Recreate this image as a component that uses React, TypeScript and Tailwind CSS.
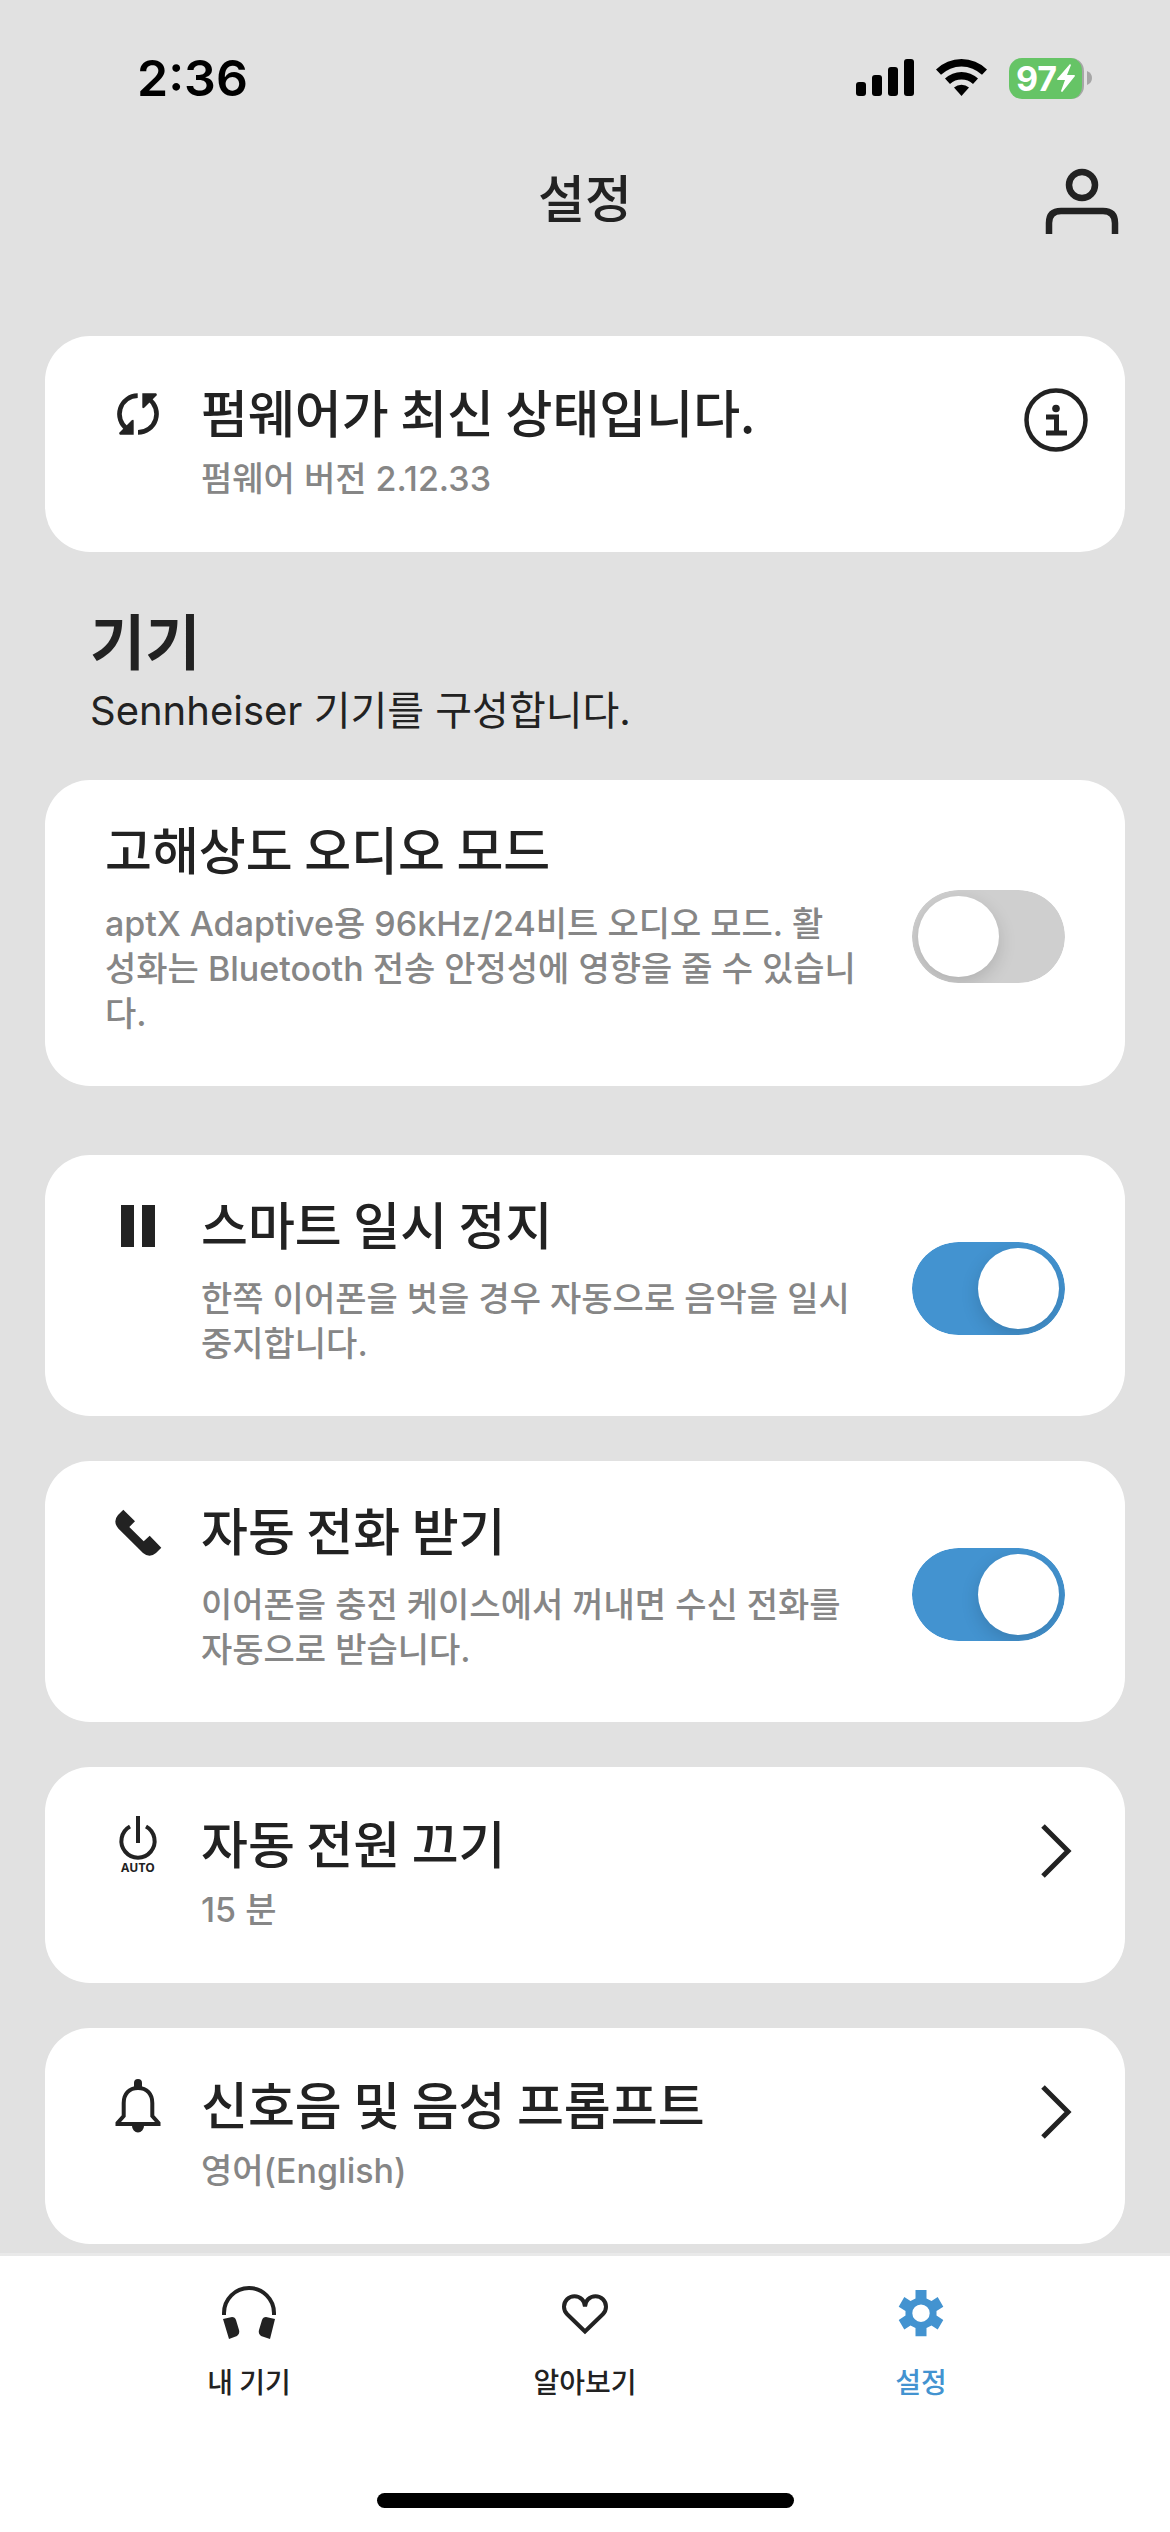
import { useState } from "react";
import type { ReactNode } from "react";
import clsx from "clsx";

/* Icons */

function SyncIcon() {
  return (
    <svg width="48" height="48" viewBox="0 0 48 48" fill="none" aria-hidden="true">
      <path d="M23.700 5.600A18.500 18.500 0 0 0 13 39" stroke="currentColor" strokeWidth="4.600" />
      <path d="M24 42.400A18.500 18.500 0 0 0 35 9" stroke="currentColor" strokeWidth="4.600" />
      <path d="M19.700 31V44.700H6Q4.500 44 5.500 42.500L17.500 30.500Q19.700 29 19.700 31Z" fill="currentColor" />
      <path d="M28.300 17V3.300H42Q43.500 4 42.500 5.500L30.500 17.500Q28.300 19 28.300 17Z" fill="currentColor" />
    </svg>
  );
}

function PauseIcon() {
  return (
    <svg width="48" height="48" viewBox="0 0 48 48" fill="currentColor" aria-hidden="true">
      <path d="M7 3h13v42H7zM28 3h13v42H28z" />
    </svg>
  );
}

function PhoneIcon() {
  return (
    <svg width="48" height="48" viewBox="0 0 48 48" fill="currentColor" aria-hidden="true">
      <path d="M9.300 1.700L21 13.300L15.300 19L29.700 33.300L35.700 27.700L47.300 39.700L42 45Q35.500 50.500 29 45L4.300 20.500Q-1.500 13.500 4 7Z" />
    </svg>
  );
}

function PowerAutoIcon() {
  return (
    <svg width="48" height="66" viewBox="0 0 48 66" aria-hidden="true">
      <path
        d="M16 14.500A16.600 16.600 0 1 0 32 14.500M24 4V31"
        fill="none"
        stroke="currentColor"
        strokeWidth="4"
      />
      <text
        x="24"
        y="60"
        textAnchor="middle"
        fill="currentColor"
        className="font-['Open_Sans',sans-serif] text-[12px] font-bold"
      >
        AUTO
      </text>
    </svg>
  );
}

function BellIcon() {
  return (
    <svg width="48" height="56" viewBox="0 0 48 56" aria-hidden="true">
      <path
        d="M24 10C15 10 9.700 16 9.700 25V38L3.500 45V46H44.500V45L38.300 38V25C38.300 16 33 10 24 10Z"
        fill="none"
        stroke="currentColor"
        strokeWidth="4"
      />
      <path d="M20 9V5a4 4 0 0 1 8 0v4zM18 48h12a6 6.500 0 0 1-12 0z" fill="currentColor" />
    </svg>
  );
}

function InfoIcon() {
  return (
    <svg width="64" height="64" viewBox="0 0 64 64" fill="none" aria-hidden="true">
      <circle cx="32" cy="32" r="29.500" stroke="currentColor" strokeWidth="4.500" />
      <circle cx="32" cy="20.500" r="3.800" fill="currentColor" />
      <path d="M22 29H32.500V45M22 45H43" stroke="currentColor" strokeWidth="5" />
    </svg>
  );
}

function ChevronIcon() {
  return (
    <svg width="32" height="54" viewBox="0 0 32 54" fill="none" aria-hidden="true">
      <path d="M3 2L28 27L3 52" stroke="currentColor" strokeWidth="5" />
    </svg>
  );
}

function PersonIcon() {
  return (
    <svg width="74" height="68" viewBox="0 0 74 68" fill="none" aria-hidden="true">
      <circle cx="37" cy="17" r="13" stroke="currentColor" strokeWidth="6.500" />
      <path d="M4 66V55Q4 43 16 43H58Q70 43 70 55V66" stroke="currentColor" strokeWidth="6.500" />
    </svg>
  );
}

function HeadphonesIcon() {
  return (
    <svg width="54" height="54" viewBox="0 0 54 54" aria-hidden="true">
      <path d="M2 29V27A25 25 0 0 1 52 27V29" fill="none" stroke="currentColor" strokeWidth="4" />
      <path
        d="M1 33L10 31Q13 31 14 34L17 44Q18 48 15 50L7 53ZM53 33L44 31Q41 31 40 34L37 44Q36 48 39 50L48 53Z"
        fill="currentColor"
      />
    </svg>
  );
}

function HeartIcon() {
  return (
    <svg width="54" height="54" viewBox="0 0 54 54" fill="none" aria-hidden="true">
      <path
        d="M27 45.500L9.200 28.200A10.500 10.500 0 0 1 6 20.700A10.500 10.500 0 0 1 27 20.700A10.500 10.500 0 0 1 48 20.700A10.500 10.500 0 0 1 44.800 28.200Z"
        stroke="currentColor"
        strokeWidth="4"
      />
    </svg>
  );
}

function GearIcon() {
  return (
    <svg width="54" height="54" viewBox="0 0 54 54" fill="currentColor" aria-hidden="true">
      <path
        fillRule="evenodd"
        d="M21.500 4H32.500V12.500L37.500 15L43.700 11L49.300 20.700L42.500 25V29.500L49.300 34L43.700 43.500L37.500 39.500L32.500 42V50.300H21.500V42L16.500 39.500L10.300 43.500L4.700 34L11.500 29.500V25L4.700 20.700L10.300 11L16.500 15L21.500 12.500ZM27 18.500A8.700 8.700 0 1 0 27 35.900A8.700 8.700 0 1 0 27 18.500Z"
      />
    </svg>
  );
}

/* Status bar */

function StatusBar() {
  return (
    <div className="flex items-center justify-between pt-12 pr-[78px] pl-[137px]">
      <span className="font-[Inter,sans-serif] text-[50px] leading-[60px] font-semibold text-black">
        2:36
      </span>
      <div className="flex items-center">
        <svg width="58" height="38" viewBox="0 0 58 38" aria-hidden="true">
          <rect x="0" y="23" width="10" height="14" rx="3" />
          <rect x="16" y="16" width="10" height="21" rx="3" />
          <rect x="32" y="8" width="10" height="29" rx="3" />
          <rect x="48" y="0" width="10" height="37" rx="3" />
        </svg>
        <svg className="ml-[22px]" width="51" height="38" viewBox="0 0 51 38" aria-hidden="true">
          <path d="M0 10.500A36.500 36.500 0 0 1 51 10.500L46 15.800A29.500 29.500 0 0 0 5 15.800Z" />
          <path d="M9 19.500A24 24 0 0 1 42 19.500L37 25A17 17 0 0 0 14 25Z" />
          <path d="M18 28.500A12 12 0 0 1 33 28.500L25.500 37Z" />
        </svg>
        <div className="ml-[22px] flex h-[41px] w-[75px] items-center justify-center rounded-[13px] border-r-2 border-[#a6a6a6] bg-[#66c466] text-white">
          <span className="font-[Inter,sans-serif] text-[34px] leading-[41px] font-bold">97</span>
          <svg width="18" height="28" viewBox="0 0 18 28" fill="currentColor" aria-hidden="true">
            <path d="M13 0L0 15Q0 16 1 16H8L4 27Q5 29 6 27L18 12Q18 11 17 11H10L14 1Z" />
          </svg>
        </div>
        <svg className="ml-[3px]" width="5" height="14" viewBox="0 0 5 14" fill="#a6a6a6" aria-hidden="true">
          <path d="M0 0Q5 2 5 7T0 14Z" />
        </svg>
      </div>
    </div>
  );
}

/* Cards */

type CardTextProps = {
  title: string;
  description: string;
};

function CardText({ title, description }: CardTextProps) {
  return (
    <>
      <span className="block text-[51px] leading-[60px] font-medium">{title}</span>
      <span className="block font-[Inter,'Noto_Sans_CJK_KR',sans-serif] text-[34px] leading-[45px] font-medium whitespace-pre-line text-[#868686]">
        {description}
      </span>
    </>
  );
}

type ToggleCardProps = CardTextProps & {
  id: string;
  icon?: ReactNode;
  defaultOn?: boolean;
};

function ToggleCard({ id, icon, defaultOn = false, ...text }: ToggleCardProps) {
  const [on, setOn] = useState(defaultOn);

  return (
    <div
      className={clsx(
        "flex items-center rounded-[45px] bg-white pt-[6px] pr-[60px]",
        icon ? "pl-[69px]" : "pl-[60px]"
      )}
    >
      {icon && (
        <div className="mt-8 flex h-[66px] w-12 shrink-0 items-center justify-center self-start">
          {icon}
        </div>
      )}
      <label
        htmlFor={id}
        className={clsx(
          "flex min-w-0 flex-1 flex-col gap-[23px] pt-8 pr-10 pb-[50px]",
          icon && "pl-[39px]"
        )}
      >
        <CardText {...text} />
      </label>
      {/* Clip the thumb's shadow to the track */}
      <span className="relative h-[93px] w-[153px] shrink-0 overflow-hidden rounded-full">
        <input
          id={id}
          type="checkbox"
          role="switch"
          checked={on}
          onChange={(e) => setOn(e.target.checked)}
          className="block h-full w-full cursor-pointer appearance-none rounded-full bg-[#cfcfcf] checked:bg-[#4393d0]"
        />
        <span
          className={clsx(
            "pointer-events-none absolute top-[6px] size-[81px] rounded-full bg-white shadow-[0_6px_18px_rgba(0,0,0,0.15)]",
            on ? "right-[6px]" : "left-[6px]"
          )}
        />
      </span>
    </div>
  );
}

type LinkCardProps = CardTextProps & {
  icon: ReactNode;
  trailing: ReactNode;
};

function LinkCard({ icon, trailing, ...text }: LinkCardProps) {
  return (
    <button
      type="button"
      className="flex w-full items-start rounded-[45px] bg-white pt-[45px] pr-[37px] pb-[51px] pl-[69px] text-left"
    >
      <span className="flex h-[66px] w-12 shrink-0 items-center justify-center">{icon}</span>
      <span className="flex min-w-0 flex-1 flex-col gap-[15px] pl-[39px]">
        <CardText {...text} />
      </span>
      <span className="flex h-[78px] w-16 shrink-0 items-center justify-center">{trailing}</span>
    </button>
  );
}

/* Bottom navigation */

const tabs = [
  { label: "내 기기", icon: <HeadphonesIcon />, active: false },
  { label: "알아보기", icon: <HeartIcon />, active: false },
  { label: "설정", icon: <GearIcon />, active: true },
];

function TabBar() {
  return (
    <nav className="border-t-[3px] border-[#e9e9e9] bg-white px-[81px] pt-[30px] pb-6">
      <div className="grid grid-cols-3">
        {tabs.map((tab) => (
          <a
            key={tab.label}
            href="#"
            aria-current={tab.active ? "page" : undefined}
            className={clsx(
              "flex flex-col items-center gap-[23px]",
              tab.active ? "text-[#4393d0]" : "text-[#222222]"
            )}
          >
            {tab.icon}
            <span className="text-[28px] leading-9 font-medium">{tab.label}</span>
          </a>
        ))}
      </div>
      <div className="mx-auto mt-[94px] h-[15px] w-[417px] rounded-full bg-black" />
    </nav>
  );
}

export default function App() {
  return (
    <div className="flex min-h-screen flex-col bg-[#e1e1e1] font-['Noto_Sans_CJK_KR',sans-serif] text-[#222222]">
      <StatusBar />

      <header className="grid grid-cols-[1fr_auto_1fr] items-start px-[51px] pt-[60px]">
        <h1 className="col-start-2 text-[51px] leading-[56px] font-medium">설정</h1>
        <button type="button" aria-label="계정" className="justify-self-end">
          <PersonIcon />
        </button>
      </header>

      <main className="flex flex-1 flex-col px-[45px] pt-[100px] pb-[9px]">
        <LinkCard
          icon={<SyncIcon />}
          title="펌웨어가 최신 상태입니다."
          description="펌웨어 버전 2.12.33"
          trailing={<InfoIcon />}
        />

        <div className="flex flex-col gap-[6px] pt-12 pb-[42px] pl-[45px]">
          <h2 className="text-[60px] leading-[78px] font-bold">기기</h2>
          <p className="font-[Inter,'Noto_Sans_CJK_KR',sans-serif] text-[40px] leading-[54px]">
            Sennheiser 기기를 구성합니다.
          </p>
        </div>

        <ToggleCard
          id="hi-res"
          title="고해상도 오디오 모드"
          description={
            "aptX Adaptive용 96kHz/24비트 오디오 모드. 활\n성화는 Bluetooth 전송 안정성에 영향을 줄 수 있습니\n다."
          }
        />

        <div className="flex flex-col gap-[45px] pt-[69px]">
          <ToggleCard
            id="smart-pause"
            icon={<PauseIcon />}
            title="스마트 일시 정지"
            description="한쪽 이어폰을 벗을 경우 자동으로 음악을 일시 중지합니다."
            defaultOn
          />
          <ToggleCard
            id="auto-answer"
            icon={<PhoneIcon />}
            title="자동 전화 받기"
            description="이어폰을 충전 케이스에서 꺼내면 수신 전화를 자동으로 받습니다."
            defaultOn
          />
          <LinkCard
            icon={<PowerAutoIcon />}
            title="자동 전원 끄기"
            description="15 분"
            trailing={<ChevronIcon />}
          />
          <LinkCard
            icon={<BellIcon />}
            title="신호음 및 음성 프롬프트"
            description="영어(English)"
            trailing={<ChevronIcon />}
          />
        </div>
      </main>

      <TabBar />
    </div>
  );
}
